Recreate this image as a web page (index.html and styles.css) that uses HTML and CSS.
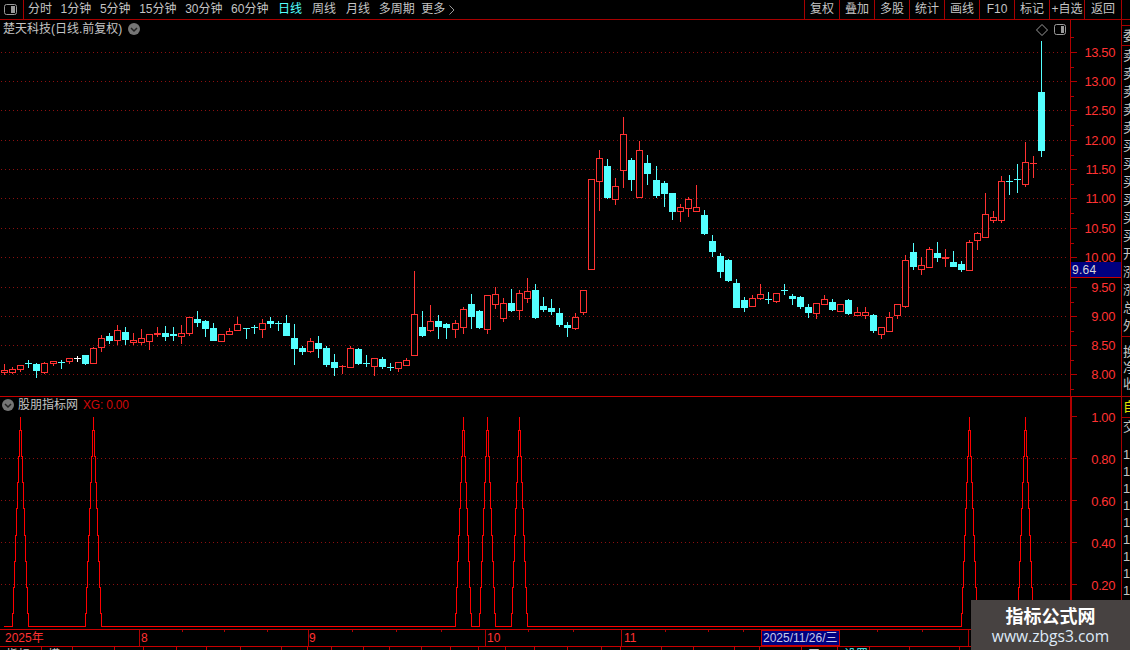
FILE: index.html
```html
<!DOCTYPE html>
<html lang="zh-CN">
<head>
<meta charset="utf-8">
<title>楚天科技</title>
<link rel="stylesheet" href="styles.css">
</head>
<body>
<div class="app">
  <header class="toolbar">
    <div class="toggle">
      <svg class="toggle-icon" width="13" height="11" viewBox="0 0 13 11"><rect x="0.5" y="0.5" width="12" height="10" rx="2" class="ico-line"/><rect x="7" y="2" width="4" height="7" class="ico-fill"/></svg>
    </div>
    <nav class="periods">
      <span>分时</span><span>1分钟</span><span>5分钟</span><span>15分钟</span><span>30分钟</span><span>60分钟</span>
      <span class="active">日线</span><span class="wide">周线</span><span class="wide">月线</span><span>多周期</span>
      <span class="more">更多 <svg width="6" height="10" viewBox="0 0 6 10"><path d="M0.5 0.5 L5 5 L0.5 9.5" class="ico-line"/></svg></span>
    </nav>
    <nav class="actions">
      <span>复权</span><span>叠加</span><span>多股</span><span>统计</span><span>画线</span><span>F10</span><span>标记</span><span>+自选</span><span class="back">返回</span>
    </nav>
  </header>
  <div class="workspace">
    <main class="charts">
      <section class="panel panel-main">
        <div class="row">
          <svg id="plot-main" class="plot" width="1070" height="376"></svg>
          <svg id="axis-main" class="axis" width="51" height="376"></svg>
        </div>
        <div class="legend legend-main">
          <span>楚天科技(日线.前复权)</span>
          <svg width="12" height="12" viewBox="0 0 12 12"><circle cx="6" cy="6" r="6" class="knob"/><path d="M3 5 L6 8 L9 5" class="knob-mark"/></svg>
        </div>
        <div class="corner-icons">
          <svg width="12" height="12" viewBox="0 0 12 12"><path d="M6 0.5 L11.5 6 L6 11.5 L0.5 6 Z" class="ico-line"/></svg>
          <svg width="13" height="12" viewBox="0 0 13 12"><rect x="0.5" y="0.5" width="11" height="10" rx="2" class="ico-line"/><rect x="7" y="2" width="3" height="7" class="ico-fill"/></svg>
        </div>
        <div class="price-tag">9.64</div>
      </section>
      <section class="panel panel-sub">
        <div class="row">
          <svg id="plot-sub" class="plot" width="1070" height="232"></svg>
          <svg id="axis-sub" class="axis" width="51" height="232"></svg>
        </div>
        <div class="legend legend-sub">
          <svg width="12" height="12" viewBox="0 0 12 12"><circle cx="6" cy="6" r="6" class="knob"/><path d="M3 5 L6 8 L9 5" class="knob-mark"/></svg>
          <span>股朋指标网</span>
          <span class="xg">XG: 0.00</span>
        </div>
      </section>
      <svg id="dates" class="dates" width="1121" height="16"></svg>
      <div class="tabs" id="tabs"></div>
    </main>
    <aside class="strip">
      <div class="strip-group g1">委</div>
      <div class="strip-group g2">卖<br>卖<br>卖<br>卖<br>卖<br>买<br>买<br>买<br>买<br>买<br>买<br>开<br>涨<br>涨<br>总<br>外</div>
      <div class="strip-group g3">换<br>净<br>收</div>
      <div class="strip-group g4">自</div>
      <div class="strip-group g5"><div class="g5-head">交</div>1<br>1<br>1<br>1<br>1<br>1<br>1<br>1<br>1<br>1</div>
    </aside>
  </div>
  <div class="watermark">
    <div class="wm-title">指标公式网</div>
    <div class="wm-url">www.zbgs3.com</div>
  </div>
</div>
<script src="chart.js"></script>
</body>
</html>
```
FILE: styles.css
```css
* { box-sizing: border-box; }
html, body { margin: 0; padding: 0; background: #000; }
body { font-family: "Liberation Sans", "Noto Sans CJK SC", sans-serif; font-size: 12px; color: #c4c4c4; }
.app { position: relative; width: 1130px; height: 650px; overflow: hidden; background: #000; display: flex; flex-direction: column; }
svg { display: block; }

.toolbar { height: 20px; flex: none; display: flex; align-items: stretch; border-bottom: 1px solid #a80000; line-height: 19px; }
.toggle { width: 24px; border-right: 1px solid #a80000; display: flex; align-items: center; justify-content: center; padding-right: 2px; }
.periods { display: flex; gap: 8.6px; padding-left: 4px; }
.periods .active { color: #54ffff; margin-left: 1px; }
.periods .wide { margin-left: 1.4px; }
.periods .more { margin-left: -2px; display: flex; align-items: center; gap: 4px; }
.actions { margin-left: auto; display: flex; padding-right: 8px; }
.actions span { width: 35px; border-left: 1px solid #a80000; text-align: center; }
.actions .back { width: 38px; border-right: 1px solid #a80000; }

.ico-line { fill: none; stroke: #9a9a9a; stroke-width: 1; }
.ico-fill { fill: #9a9a9a; }
.knob { fill: #757575; }
.knob-mark { fill: none; stroke: #222; stroke-width: 1.5; }

.workspace { flex: 1; display: flex; min-height: 0; }
.charts { width: 1121px; flex: none; display: flex; flex-direction: column; }
.panel { position: relative; flex: none; }
.panel-main { height: 377px; border-bottom: 1px solid #c80000; }
.panel-sub { height: 233px; border-bottom: 1px solid #c80000; }
.row { display: flex; }
.plot, .axis { flex: none; }

.legend { position: absolute; display: flex; align-items: center; height: 14px; line-height: 14px; white-space: nowrap; }
.legend-main { left: 3px; top: 2px; gap: 6px; }
.legend-sub { left: 2px; top: 1px; gap: 4px; }
.xg { color: #d00808; margin-left: 1px; letter-spacing: -0.2px; }
.corner-icons { position: absolute; left: 1036px; top: 4px; display: flex; gap: 6px; }
.price-tag { position: absolute; left: 1071px; top: 242px; width: 50px; height: 16px; background: #000080; border-bottom: 1px solid #c80000; border-top: 1px solid #000080; color: #d8d8d8; font-size: 12px; line-height: 14px; padding-left: 1px; letter-spacing: 0.3px; }

.grid { stroke: #8c1010; stroke-width: 1; stroke-dasharray: 1 3; }
.axis-line { stroke: #b00000; stroke-width: 1; }
.axis-line.bold { stroke-width: 2; }
.axis-label { fill: #ff3232; font-size: 13px; letter-spacing: -0.4px; font-family: "Liberation Sans", sans-serif; text-anchor: end; }
.spike { fill: none; stroke: #ff0000; stroke-width: 1; shape-rendering: crispEdges; }
.candle { shape-rendering: crispEdges; }

.dates { flex: none; }
.date-label { fill: #ff3232; font-size: 12px; }
.date-box { fill: #000080; stroke: #c80000; stroke-width: 1; }
.date-current { fill: #c8c8e8; font-size: 12px; }
.tabs { flex: none; height: 4px; overflow: hidden; display: flex; border-top: 1px solid #c80000; }
.tab { border-right: 1px solid #c80000; line-height: 14px; padding: 1px 0 0 6px; white-space: nowrap; overflow: hidden; flex: none; }
.tab-on { color: #54ffff; }

.strip { width: 9px; flex: none; border-left: 1px solid #a80000; overflow: hidden; line-height: 18px; font-size: 13px; white-space: nowrap; }
.strip-group { padding-left: 1px; border-bottom: 1px solid #a80000; width: 20px; overflow: hidden; }
.g1 { height: 21px; margin-top: 5px; border-top: 1px solid #a80000; line-height: 19px; }
.g2 { height: 291px; padding-top: 1px; }
.g3 { height: 60px; line-height: 16px; padding-top: 7px; }
.g4 { height: 21px; color: #e0e000; padding-top: 1px; }
.g5 { border-bottom: 0; line-height: 17px; height: 180px; }
.g5-head { height: 28px; }

.watermark { position: absolute; left: 971px; top: 600px; width: 159px; height: 50px; background: #474241; text-align: center; }
.wm-title { color: #fff; font-family: "Noto Sans CJK SC", sans-serif; font-size: 18px; font-weight: 700; line-height: 24px; margin-top: 3px; }
.wm-url { color: #dfeaf8; font-family: "Open Sans", sans-serif; font-size: 15.6px; line-height: 18px; }
```
FILE: chart.js
```js
var NS = 'http://www.w3.org/2000/svg';
var RED = '#ff3232', CYAN = '#54ffff';
// type, body top, body bottom, high, low (pixel rows in the plot)
var candles = [
['r',370,372,364,374],['r',369,372,367,373],['r',365,369,365,371],['c',363,363,360,367],['c',364,370,363,377],
['r',363,372,362,373],['r',361,363,361,365],['c',362,362,360,368],['r',358,361,358,363],['w',358,358,356,361],
['c',355,363,355,364],['r',348,363,347,363],['r',338,347,335,351],['c',336,340,333,343],['r',330,340,325,344],
['c',332,339,327,344],['r',340,342,333,344],['r',338,342,329,344],['r',334,341,334,349],['r',333,334,327,336],
['c',333,336,326,340],['c',334,335,327,340],['r',333,336,325,343],['r',317,333,317,335],['c',319,322,311,326],
['c',321,328,320,336],['c',328,340,323,340],['r',334,341,334,341],['r',331,334,328,334],['r',324,330,317,330],
['c',328,328,328,338],['c',327,327,325,333],['r',323,329,319,337],['c',321,323,317,327],['c',323,323,321,330],
['c',323,335,315,335],['c',338,348,324,364],['c',348,351,346,354],['r',341,351,338,352],['c',343,348,336,357],
['c',348,364,346,366],['c',362,367,354,375],['r',366,366,365,373],['r',348,367,346,367],['c',349,363,348,364],
['c',363,363,355,366],['r',358,366,358,375],['c',359,366,357,368],['c',367,367,363,370],['r',362,368,362,371],
['r',360,365,358,365],['r',314,355,271,355],['c',327,335,311,336],['r',321,330,305,331],['c',321,326,315,338],
['c',324,327,323,338],['r',323,329,320,337],['r',309,327,307,333],['c',304,316,294,328],['c',311,327,310,328],
['r',295,329,295,333],['r',294,304,287,308],['r',303,318,298,321],['c',303,310,289,311],['r',293,310,290,319],
['r',291,298,278,302],['c',290,317,284,318],['c',306,309,297,311],['c',308,311,299,314],['c',313,324,308,326],
['c',325,327,322,336],['r',317,328,313,329],['r',290,312,290,314],['r',179,269,179,269],['r',158,181,150,210],
['c',166,197,159,198],['r',186,199,178,204],['r',134,170,117,187],['c',160,179,158,190],['r',150,197,141,197],
['c',163,173,155,184],['c',180,195,166,197],['c',183,193,181,206],['c',193,211,193,219],['r',207,211,204,221],
['r',199,208,197,216],['r',207,211,185,211],['c',215,233,210,234],['c',241,251,235,256],['c',256,271,253,277],
['c',260,280,259,281],['c',283,307,279,307],['c',300,307,297,311],['r',298,306,295,306],['r',294,298,284,299],
['c',299,299,292,303],['r',293,301,293,302],['c',290,290,284,294],['c',296,298,294,304],['c',297,306,296,308],
['c',307,312,304,317],['r',303,313,303,318],['r',299,304,295,304],['c',302,309,299,310],['r',304,311,304,311],
['c',300,313,299,314],['r',312,315,307,315],['r',312,315,307,318],['c',315,330,314,332],['r',327,334,327,338],
['r',317,331,312,331],['r',304,315,304,318],['r',260,306,255,307],['c',252,266,243,269],['r',265,269,257,274],
['r',249,267,247,267],['c',253,257,242,261],['r',257,258,249,266],['c',262,266,251,266],['c',264,269,261,271],
['r',242,270,240,270],['r',233,240,232,249],['r',214,237,193,237],['r',217,220,211,222],['r',181,220,176,222],
['c',181,181,175,194],['c',179,179,164,192],['r',162,184,142,186],['r',163,163,156,177],['c',92,150,41,156]
];
var TOP = 20, SUB_TOP = 397;

function el(parent, name, attrs, text) {
  var n = document.createElementNS(NS, name);
  for (var k in attrs) n.setAttribute(k, attrs[k]);
  if (text !== undefined) n.textContent = text;
  parent.appendChild(n);
  return n;
}
function col(i) { return Math.round(4.3 + 8.04 * i); }

// main plot
var plot = document.getElementById('plot-main');
var axisMain = document.getElementById('axis-main');
var prices = [[52,'13.50'],[81,'13.00'],[110,'12.50'],[140,'12.00'],[169,'11.50'],[198,'11.00'],[228,'10.50'],[257,'10.00'],[287,'9.50'],[316,'9.00'],[345,'8.50'],[374,'8.00']];
prices.forEach(function (p) {
  var y = p[0] - TOP + 0.5;
  el(plot, 'line', { x1: 1, x2: 1067, y1: y, y2: y, 'class': 'grid' });
  el(axisMain, 'line', { x1: 1, x2: 7, y1: y, y2: y, 'class': 'axis-line' });
  var my = Math.round(p[0] + 14.6 - TOP) + 0.5;
  if (my < 376) el(axisMain, 'line', { x1: 1, x2: 4, y1: my, y2: my, 'class': 'axis-line' });
  el(axisMain, 'text', { x: 45, y: p[0] - TOP + 5, 'class': 'axis-label' }, p[1]);
});
el(axisMain, 'line', { x1: 0.5, x2: 0.5, y1: 0, y2: 376, 'class': 'axis-line' });
el(axisMain, 'line', { x1: 1, x2: 4, y1: 17.5, y2: 17.5, 'class': 'axis-line' });

candles.forEach(function (c, i) {
  var x = col(i), t = c[1] - TOP, b = c[2] - TOP, h = c[3] - TOP, l = c[4] - TOP;
  var color = c[0] === 'r' ? RED : c[0] === 'c' ? CYAN : '#ffffff';
  var g = el(plot, 'g', { 'class': 'candle' });
  if (h < t) el(g, 'rect', { x: x, y: h, width: 1, height: t - h, fill: color });
  if (l > b) el(g, 'rect', { x: x, y: b + 1, width: 1, height: l - b, fill: color });
  if (b === t) {
    el(g, 'rect', { x: x - 3, y: t, width: 7, height: 1, fill: color });
  } else if (c[0] === 'r') {
    el(g, 'rect', { x: x - 2.5, y: t + 0.5, width: 6, height: b - t, fill: '#000', stroke: color, 'stroke-width': 1 });
  } else {
    el(g, 'rect', { x: x - 3, y: t, width: 7, height: b - t + 1, fill: color });
  }
});

// indicator panel
var sub = document.getElementById('plot-sub');
var axisSub = document.getElementById('axis-sub');
[[417,'1.00'],[459,'0.80'],[501,'0.60'],[543,'0.40'],[585,'0.20']].forEach(function (p) {
  var y = p[0] - SUB_TOP - 0.5;
  if (p[0] !== 417) el(sub, 'line', { x1: 1, x2: 1067, y1: y, y2: y, 'class': 'grid' });
  el(axisSub, 'line', { x1: 1, x2: 7, y1: y, y2: y, 'class': 'axis-line' });
  el(axisSub, 'text', { x: 45, y: y + 5, 'class': 'axis-label' }, p[1]);
});
el(axisSub, 'line', { x1: 1, x2: 1, y1: 0, y2: 232, 'class': 'axis-line bold' });

var levels = [626, 613, 587, 561, 535, 508, 482, 456, 430, 416].map(function (v) { return v - SUB_TOP + 0.5; });
var d = 'M4 ' + levels[0];
[2, 11, 57, 60, 64, 120, 127].forEach(function (i) {
  var c = col(i) + 0.5, k;
  d += ' H' + (c - 8);
  for (k = 1; k <= 8; k++) d += ' V' + levels[k] + ' H' + (c - 8 + k);
  d += ' V' + levels[9] + ' V' + levels[8];
  for (k = 7; k >= 0; k--) d += ' H' + (c + 8 - k) + ' V' + levels[k];
});
d += ' H1068';
el(sub, 'path', { d: d, 'class': 'spike' });

// date axis
var dates = document.getElementById('dates');
[[5,'2025年'],[141,'8'],[309,'9'],[487,'10'],[624,'11']].forEach(function (p) {
  el(dates, 'text', { x: p[0], y: 12, 'class': 'date-label' }, p[1]);
});
[139, 308, 485, 621, 968].forEach(function (x) {
  el(dates, 'line', { x1: x + 0.5, x2: x + 0.5, y1: 0, y2: 16, 'class': 'axis-line' });
});
[182, 224, 267, 352, 396, 441, 528, 573, 665, 708, 743, 877, 922].forEach(function (x) {
  el(dates, 'line', { x1: x + 0.5, x2: x + 0.5, y1: 0, y2: 2, 'class': 'axis-line' });
});
el(dates, 'rect', { x: 761.5, y: 0.5, width: 78, height: 15, 'class': 'date-box' });
el(dates, 'text', { x: 763, y: 12, 'class': 'date-current' }, '2025/11/26/三');

// bottom tab row, cut off by the window edge: only the tops of a few labels show
var tabs = document.getElementById('tabs');
var tabEdges = [[42,'指标'],[73,'模'],[115],[144],[177],[207],[241],[282],[308],[332],[364],[390],[422],[451],[479],[506],[535],[568],[602],[621],[662],[694],[735],[760],[802],[838,'平'],[870,'设置',1],[910],[960],[1010],[1060],[1121]];
var prev = 0;
tabEdges.forEach(function (t) {
  var s = document.createElement('span');
  s.className = t[2] ? 'tab tab-on' : 'tab';
  if (t[1]) s.textContent = t[1];
  s.style.width = (t[0] - prev) + 'px';
  tabs.appendChild(s);
  prev = t[0];
});
```
